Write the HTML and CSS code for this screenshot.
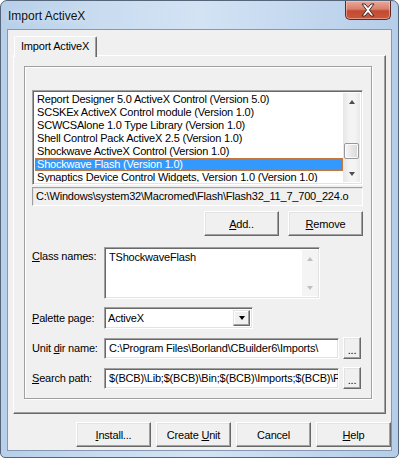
FILE: index.html
```html
<!DOCTYPE html>
<html lang="en">
<head>
    <meta charset="UTF-8">
    <title>Import ActiveX</title>
    <link rel="stylesheet" href="styles.css">
</head>
<body>
<div class="window">
    <div class="titlebar">
        <span class="title">Import ActiveX</span>
        <div class="close">
            <svg width="16" height="14" viewBox="0 0 16 14">
                <path d="M2 1h3l3 3.5 3-3.5h3l-4.5 6 4.5 6h-3l-3-3.5-3 3.5h-3l4.5-6z" fill="#fff" stroke="#3c2a2a" stroke-width="1"/>
            </svg>
        </div>
    </div>
    <div class="client">
        <div class="tabstrip">
            <div class="tab">Import ActiveX</div>
        </div>
        <div class="page">
            <div class="bevel">
                <div class="listbox">
                    <ul class="items">
                        <li>Report Designer 5.0 ActiveX Control (Version 5.0)</li>
                        <li>SCSKEx ActiveX Control module (Version 1.0)</li>
                        <li>SCWCSAlone 1.0 Type Library (Version 1.0)</li>
                        <li>Shell Control Pack ActiveX 2.5 (Version 1.0)</li>
                        <li>Shockwave ActiveX Control (Version 1.0)</li>
                        <li class="selected"><span>Shockwave Flash (Version 1.0)</span></li>
                        <li>Synaptics Device Control Widgets, Version 1.0 (Version 1.0)</li>
                    </ul>
                    <div class="vscroll">
                        <span class="arrow up"></span>
                        <span class="track"><span class="thumb"></span></span>
                        <span class="arrow down"></span>
                    </div>
                </div>
                <div class="pathbox">C:\Windows\system32\Macromed\Flash\Flash32_11_7_700_224.o</div>
                <div class="addrow">
                    <button class="btn"><u>A</u>dd..</button>
                    <button class="btn"><u>R</u>emove</button>
                </div>
                <div class="field memo-row">
                    <label><u>C</u>lass names:</label>
                    <div class="memo">
                        <span class="memo-text">TShockwaveFlash</span>
                        <div class="vscroll disabled">
                            <span class="arrow up"></span>
                            <span class="track"></span>
                            <span class="arrow down"></span>
                        </div>
                    </div>
                </div>
                <div class="field">
                    <label><u>P</u>alette page:</label>
                    <div class="combo">
                        <span class="combo-text">ActiveX</span>
                        <span class="drop"><span class="tri"></span></span>
                    </div>
                </div>
                <div class="field">
                    <label>Unit <u>d</u>ir name:</label>
                    <div class="edit">C:\Program Files\Borland\CBuilder6\Imports\</div>
                    <button class="btn dots">...</button>
                </div>
                <div class="field">
                    <label><u>S</u>earch path:</label>
                    <div class="edit">$(BCB)\Lib;$(BCB)\Bin;$(BCB)\Imports;$(BCB)\F</div>
                    <button class="btn dots">...</button>
                </div>
            </div>
        </div>
        <div class="buttons">
            <button class="btn"><u>I</u>nstall...</button>
            <button class="btn">Create <u>U</u>nit</button>
            <button class="btn">Cancel</button>
            <button class="btn"><u>H</u>elp</button>
        </div>
    </div>
</div>
</body>
</html>
```

FILE: styles.css
```css
* {
    box-sizing: border-box;
}
body {
    margin: 0;
    width: 399px;
    height: 458px;
    overflow: hidden;
    font-family: "Liberation Sans", Arial, sans-serif;
    font-size: 11px;
    letter-spacing: -0.2px;
    color: #000;
    background: #fff;
}
.window {
    width: 399px;
    height: 458px;
    padding: 0 7px;
    border: 1px solid #56667a;
    border-radius: 7px 7px 5px 5px;
    background: linear-gradient(to right, #b7cfe9 0, #c9dcf0 25%, #d3e3f4 50%, #c4d8ef 75%, #b5cde8 100%);
    display: flex;
    flex-direction: column;
}
.titlebar {
    height: 29px;
    display: flex;
    justify-content: space-between;
    align-items: flex-start;
}
.title {
    margin-top: 7px;
    font-size: 12px;
    line-height: 16px;
    letter-spacing: 0;
    color: #111;
    text-shadow: 0 0 6px #e8f2fc;
}
.close {
    width: 46px;
    height: 19px;
    border: 1px solid #5e2a22;
    border-top: none;
    border-radius: 0 0 5px 5px;
    background: linear-gradient(to bottom, #e9a99b 0, #d9806c 45%, #c24a32 55%, #c9583c 100%);
    box-shadow: inset 0 0 0 1px rgba(255, 210, 200, 0.5);
    display: flex;
    align-items: center;
    justify-content: center;
}
.client {
    width: 383px;
    height: 420px;
    background: #f0f0f0;
    box-shadow: 0 0 0 1px #8598b0;
    padding: 6px 0 0 5px;
}
.tabstrip {
    height: 19px;
    padding-left: 1px;
    display: flex;
}
.tab {
    position: relative;
    z-index: 1;
    width: 83px;
    height: 21px;
    padding: 3px 0 0 6px;
    background: #f0f0f0;
    border-top: 1px solid #fff;
    border-left: 1px solid #fff;
    border-right: 1px solid #696969;
    box-shadow: inset -1px 0 0 #a0a0a0;
    border-radius: 2px 2px 0 0;
}
.page {
    width: 373px;
    height: 359px;
    border-top: 1px solid #fff;
    border-left: 1px solid #fff;
    border-right: 1px solid #696969;
    border-bottom: 1px solid #696969;
    box-shadow: inset -1px -1px 0 #a0a0a0;
    padding: 10px 0 0 10px;
}
.bevel {
    width: 348px;
    height: 333px;
    border: 1px solid #a0a0a0;
    box-shadow: inset 1px 1px 0 #fff, 1px 1px 0 #fff;
    padding: 23px 0 0 7px;
}
.listbox, .memo, .combo, .edit {
    background: #fff;
    border-top: 1px solid #a0a0a0;
    border-left: 1px solid #a0a0a0;
    border-right: 1px solid #fff;
    border-bottom: 1px solid #fff;
    box-shadow: inset 1px 1px 0 #696969, inset -1px -1px 0 #e3e3e3;
}
.listbox {
    width: 331px;
    height: 95px;
    padding: 2px;
    display: flex;
}
.items {
    list-style: none;
    margin: 0;
    padding: 0;
    flex: 1;
    overflow: hidden;
}
.items li {
    height: 13px;
    line-height: 13px;
    padding-left: 2px;
    white-space: nowrap;
}
.items li.selected {
    background: #3399ff;
    color: #fff;
    outline: 1px dotted #c8783a;
    outline-offset: -1px;
}
.vscroll {
    width: 17px;
    display: flex;
    flex-direction: column;
    background: linear-gradient(to right, #e6e6e6, #f4f4f4 40%, #f4f4f4 70%, #e9e9e9);
}
.vscroll .arrow {
    height: 17px;
    display: flex;
    align-items: center;
    justify-content: center;
}
.vscroll .arrow::before {
    content: "";
    border-left: 3.5px solid transparent;
    border-right: 3.5px solid transparent;
}
.vscroll .up::before {
    border-bottom: 4px solid #4d4d4d;
}
.vscroll .down::before {
    border-top: 4px solid #4d4d4d;
}
.vscroll.disabled .up::before {
    border-bottom-color: #bfbfbf;
}
.vscroll.disabled .down::before {
    border-top-color: #bfbfbf;
}
.track {
    flex: 1;
    display: flex;
    flex-direction: column;
    justify-content: flex-end;
    padding-bottom: 6px;
}
.thumb {
    height: 16px;
    margin: 0 1px;
    border: 1px solid #979797;
    border-radius: 2px;
    background: linear-gradient(to right, #f6f6f6, #e6e6e6 50%, #d8d8d8);
    box-shadow: inset 0 0 0 1px #fbfbfb;
}
.pathbox {
    width: 331px;
    height: 19px;
    margin-top: 2px;
    padding: 2px 0 0 3px;
    line-height: 13px;
    border-top: 1px solid #a0a0a0;
    border-left: 1px solid #a0a0a0;
    border-right: 1px solid #fff;
    border-bottom: 1px solid #fff;
    box-shadow: inset 1px 1px 0 #e3e3e3;
    white-space: nowrap;
    overflow: hidden;
}
.btn {
    width: 75px;
    height: 25px;
    padding: 0;
    font: inherit;
    letter-spacing: inherit;
    color: #000;
    background: #f0f0f0;
    border-top: 1px solid #fff;
    border-left: 1px solid #fff;
    border-right: 1px solid #696969;
    border-bottom: 1px solid #696969;
    box-shadow: inset -1px -1px 0 #a0a0a0, inset 1px 1px 0 #e3e3e3;
}
.addrow {
    width: 331px;
    margin-top: 5px;
    display: flex;
    justify-content: flex-end;
    gap: 9px;
}
.field {
    display: flex;
    align-items: center;
    margin-top: 8px;
    height: 22px;
}
.field label {
    width: 72px;
}
.memo-row {
    margin-top: 11px;
    height: 52px;
    align-items: flex-start;
}
.memo-row label {
    padding-top: 3px;
}
.memo {
    width: 216px;
    height: 52px;
    padding: 2px 1px 2px 2px;
    display: flex;
}
.memo-text {
    flex: 1;
    padding: 1px 0 0 2px;
    line-height: 13px;
}
.memo .vscroll {
    width: 16px;
    background: #f4f4f4;
}
.combo {
    width: 149px;
    height: 22px;
    padding: 2px;
    display: flex;
    align-items: stretch;
}
.combo-text {
    flex: 1;
    padding: 2px 0 0 1px;
    line-height: 13px;
}
.drop {
    width: 17px;
    background: #f0f0f0;
    border-top: 1px solid #e3e3e3;
    border-left: 1px solid #e3e3e3;
    border-right: 1px solid #696969;
    border-bottom: 1px solid #696969;
    box-shadow: inset -1px -1px 0 #a0a0a0, inset 1px 1px 0 #fff;
    display: flex;
    align-items: center;
    justify-content: center;
}
.tri {
    border-left: 3.5px solid transparent;
    border-right: 3.5px solid transparent;
    border-top: 4px solid #000;
}
.edit {
    width: 235px;
    height: 21px;
    padding: 3px 0 0 4px;
    line-height: 13px;
    white-space: nowrap;
    overflow: hidden;
}
.btn.dots {
    width: 18px;
    height: 22px;
    margin-left: 4px;
    padding-top: 4px;
}
.buttons {
    width: 378px;
    margin-top: 8px;
    display: flex;
    justify-content: flex-end;
    gap: 5px;
}
```
